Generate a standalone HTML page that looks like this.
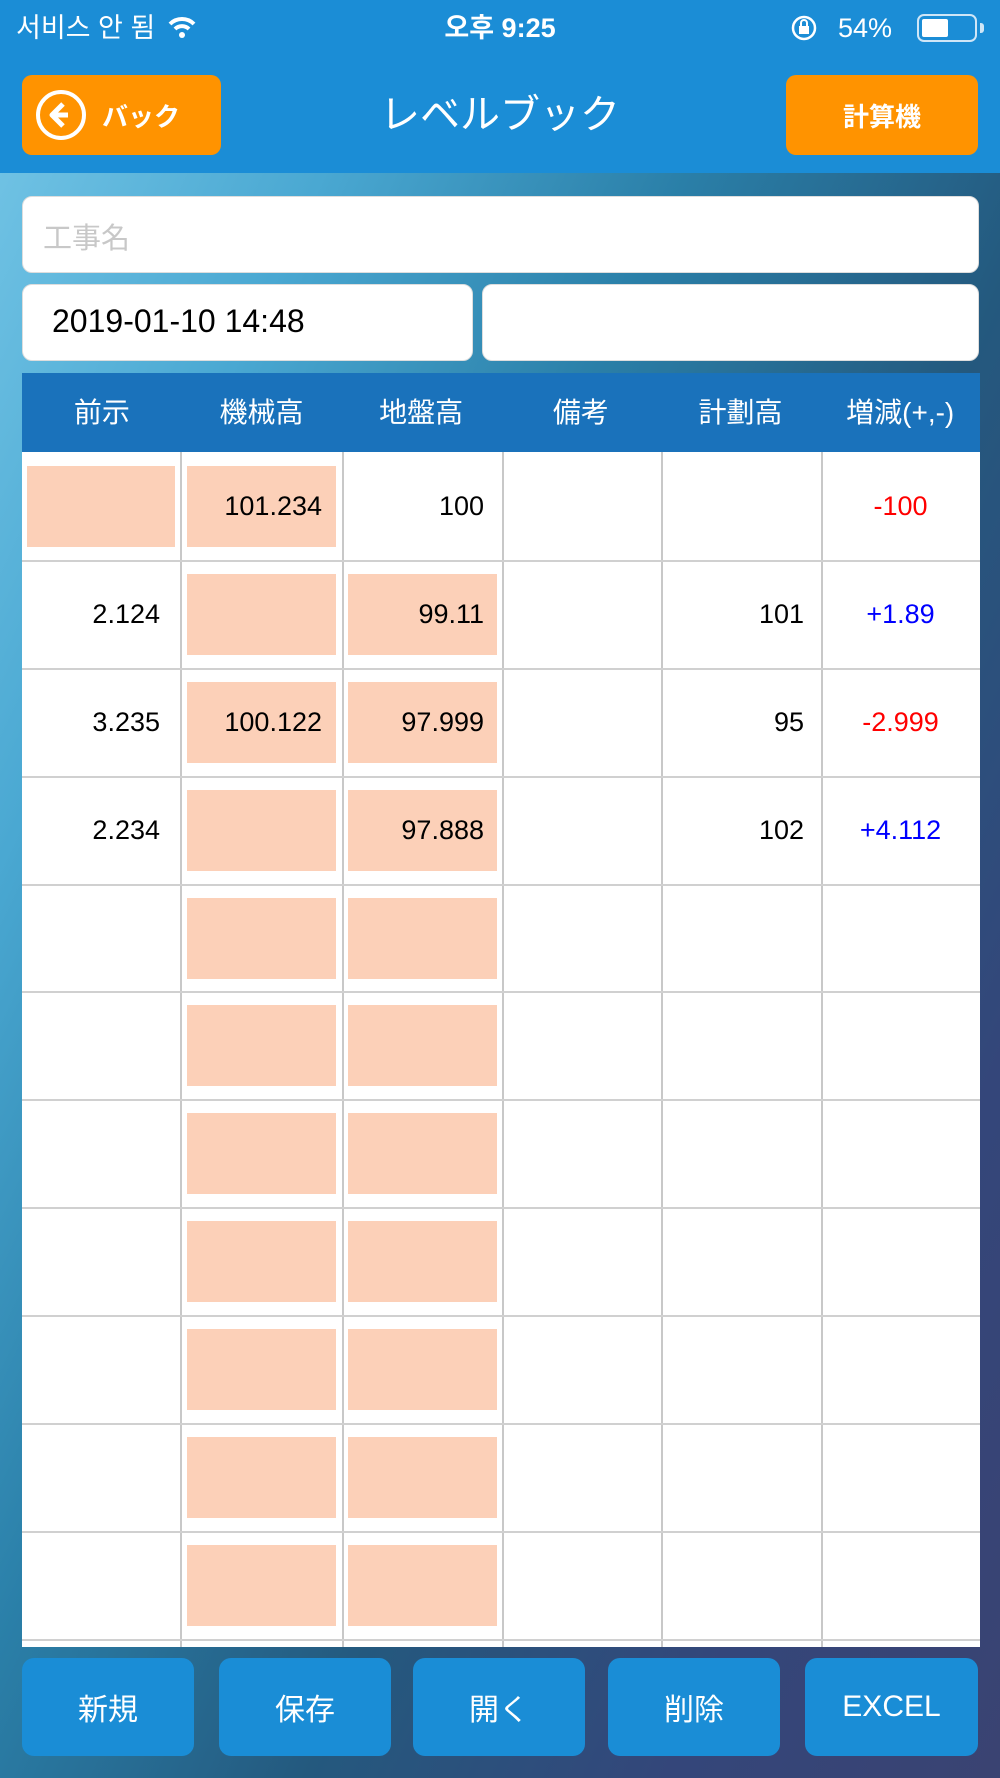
<!DOCTYPE html>
<html><head><meta charset="utf-8"><style>
*{margin:0;padding:0;box-sizing:border-box}
body{width:1000px;height:1778px;overflow:hidden;position:relative;font-family:"Liberation Sans","Noto Sans CJK JP",sans-serif;
background:linear-gradient(115deg,#78c8e8 0%,#4aa8d2 22%,#2a7fa8 42%,#24597e 62%,#34467a 82%,#3a4372 100%)}
.top{position:absolute;left:0;top:0;width:1000px;height:173px;background:#1b8dd6;color:#fff}
.sb{position:absolute;top:10px;font-size:27px;line-height:36px;height:36px;white-space:nowrap}
.btn{position:absolute;background:#ff9300;border-radius:10px;color:#fff;font-weight:bold;display:flex;align-items:center;justify-content:center}
.title{position:absolute;left:0;width:1000px;top:82px;text-align:center;font-size:40px}
.in{position:absolute;background:#fff;border-radius:10px;border:1px solid #ddd}
.hdr{position:absolute;left:22px;top:373px;width:958px;height:79px;background:#1a72bb;display:flex}
.hdr div{width:159.7px;color:#fff;font-size:28px;text-align:center;line-height:79px}
.tbl{position:absolute;left:22px;top:452px;width:958px;height:1195px;background:#fff;overflow:hidden}
.vl{position:absolute;top:0;bottom:0;width:1.5px;background:#c8c8c8}
.hl{position:absolute;left:0;right:0;height:1.5px;background:#d0d0d0}
.pc{position:absolute;background:#fcd0b8}
.v{position:absolute;font-size:27px;line-height:108px;height:108px}
.bb{position:absolute;top:1658px;height:98px;background:#1a8dd6;border-radius:12px;color:#fff;font-size:30px;display:flex;align-items:center;justify-content:center}
</style></head><body>
<div class="top">
 <div class="sb" style="left:16px">서비스 안 됨
  <svg width="30" height="24" viewBox="0 0 30 24" style="vertical-align:-2px;margin-left:4px"><path d="M3 9a17 17 0 0 1 24 0" stroke="#fff" stroke-width="4" fill="none"/><path d="M8 14a10 10 0 0 1 14 0" stroke="#fff" stroke-width="4" fill="none"/><circle cx="15" cy="20" r="3" fill="#fff"/></svg></div>
 <div class="sb" style="left:0;width:1000px;text-align:center;font-weight:bold">오후 9:25</div>
 <svg width="28" height="28" viewBox="0 0 28 28" style="position:absolute;left:790px;top:14px"><circle cx="14" cy="14" r="11" stroke="#fff" stroke-width="2.5" fill="none"/><rect x="9" y="12" width="10" height="8" fill="#fff"/><path d="M11 12v-3a3 3 0 0 1 6 0v3" stroke="#fff" stroke-width="2" fill="none"/></svg>
 <div class="sb" style="left:838px">54%</div>
 <div style="position:absolute;left:917px;top:14px;width:60px;height:28px;border:2px solid #cfe6f7;border-radius:7px"><div style="position:absolute;left:3px;top:3px;width:26px;height:18px;background:#fff;border-radius:2px"></div></div>
 <div style="position:absolute;left:980px;top:23px;width:4px;height:10px;background:#cfe6f7;border-radius:0 3px 3px 0"></div>
 <div class="btn" style="left:22px;top:75px;width:199px;height:80px;font-size:26px;justify-content:flex-start">
  <svg width="54" height="54" viewBox="0 0 54 54" style="margin:0 14px 0 12px"><circle cx="27" cy="27" r="23" stroke="#fff" stroke-width="4" fill="none"/><path d="M29 16l-11 11 11 11M18 27h16" stroke="#fff" stroke-width="5" fill="none" stroke-linejoin="round"/></svg>バック</div>
 <div class="title">レベルブック</div>
 <div class="btn" style="left:786px;top:75px;width:192px;height:80px;font-size:26px">計算機</div>
</div>
<div class="in" style="left:22px;top:196px;width:957px;height:77px"><span style="position:absolute;left:20px;top:18px;font-size:29px;color:#c8c8c8">工事名</span></div>
<div class="in" style="left:22px;top:284px;width:451px;height:77px"><span style="position:absolute;left:29px;top:18px;font-size:32px;color:#000">2019-01-10 14:48</span></div>
<div class="in" style="left:482px;top:284px;width:497px;height:77px"></div>
<div class="hdr"><div>前示</div><div>機械高</div><div>地盤高</div><div>備考</div><div>計劃高</div><div>増減(+,-)</div></div>
<div class="tbl">
 <div class="vl" style="left:158px"></div><div class="vl" style="left:320px"></div><div class="vl" style="left:480px"></div><div class="vl" style="left:639px"></div><div class="vl" style="left:799px"></div>
 <div class="hl" style="top:108px"></div><div class="hl" style="top:216px"></div><div class="hl" style="top:324px"></div><div class="hl" style="top:432px"></div><div class="hl" style="top:539px"></div><div class="hl" style="top:647px"></div><div class="hl" style="top:755px"></div><div class="hl" style="top:863px"></div><div class="hl" style="top:971px"></div><div class="hl" style="top:1079px"></div><div class="hl" style="top:1187px"></div>
 <div class="pc" style="left:5px;top:14px;width:148px;height:81px"></div>
 <div class="pc" style="left:165px;top:14px;width:149px;height:81px"></div>
 <div class="pc" style="left:165px;top:122px;width:149px;height:81px"></div><div class="pc" style="left:326px;top:122px;width:149px;height:81px"></div>
 <div class="pc" style="left:165px;top:230px;width:149px;height:81px"></div><div class="pc" style="left:326px;top:230px;width:149px;height:81px"></div>
 <div class="pc" style="left:165px;top:338px;width:149px;height:81px"></div><div class="pc" style="left:326px;top:338px;width:149px;height:81px"></div>
 <div class="pc" style="left:165px;top:446px;width:149px;height:81px"></div><div class="pc" style="left:326px;top:446px;width:149px;height:81px"></div>
 <div class="pc" style="left:165px;top:553px;width:149px;height:81px"></div><div class="pc" style="left:326px;top:553px;width:149px;height:81px"></div>
 <div class="pc" style="left:165px;top:661px;width:149px;height:81px"></div><div class="pc" style="left:326px;top:661px;width:149px;height:81px"></div>
 <div class="pc" style="left:165px;top:769px;width:149px;height:81px"></div><div class="pc" style="left:326px;top:769px;width:149px;height:81px"></div>
 <div class="pc" style="left:165px;top:877px;width:149px;height:81px"></div><div class="pc" style="left:326px;top:877px;width:149px;height:81px"></div>
 <div class="pc" style="left:165px;top:985px;width:149px;height:81px"></div><div class="pc" style="left:326px;top:985px;width:149px;height:81px"></div>
 <div class="pc" style="left:165px;top:1093px;width:149px;height:81px"></div><div class="pc" style="left:326px;top:1093px;width:149px;height:81px"></div>

 <div class="v" style="top:0;right:658px">101.234</div><div class="v" style="top:0;right:496px">100</div><div class="v" style="top:0;left:799px;width:159px;text-align:center;color:#f00">-100</div>
 <div class="v" style="top:108px;right:820px">2.124</div><div class="v" style="top:108px;right:496px">99.11</div><div class="v" style="top:108px;right:176px">101</div><div class="v" style="top:108px;left:799px;width:159px;text-align:center;color:#00f">+1.89</div>
 <div class="v" style="top:216px;right:820px">3.235</div><div class="v" style="top:216px;right:658px">100.122</div><div class="v" style="top:216px;right:496px">97.999</div><div class="v" style="top:216px;right:176px">95</div><div class="v" style="top:216px;left:799px;width:159px;text-align:center;color:#f00">-2.999</div>
 <div class="v" style="top:324px;right:820px">2.234</div><div class="v" style="top:324px;right:496px">97.888</div><div class="v" style="top:324px;right:176px">102</div><div class="v" style="top:324px;left:799px;width:159px;text-align:center;color:#00f">+4.112</div>
</div>
<div class="bb" style="left:22px;width:172px">新規</div>
<div class="bb" style="left:219px;width:172px">保存</div>
<div class="bb" style="left:413px;width:172px">開く</div>
<div class="bb" style="left:608px;width:172px">削除</div>
<div class="bb" style="left:805px;width:173px">EXCEL</div>
</body></html>
